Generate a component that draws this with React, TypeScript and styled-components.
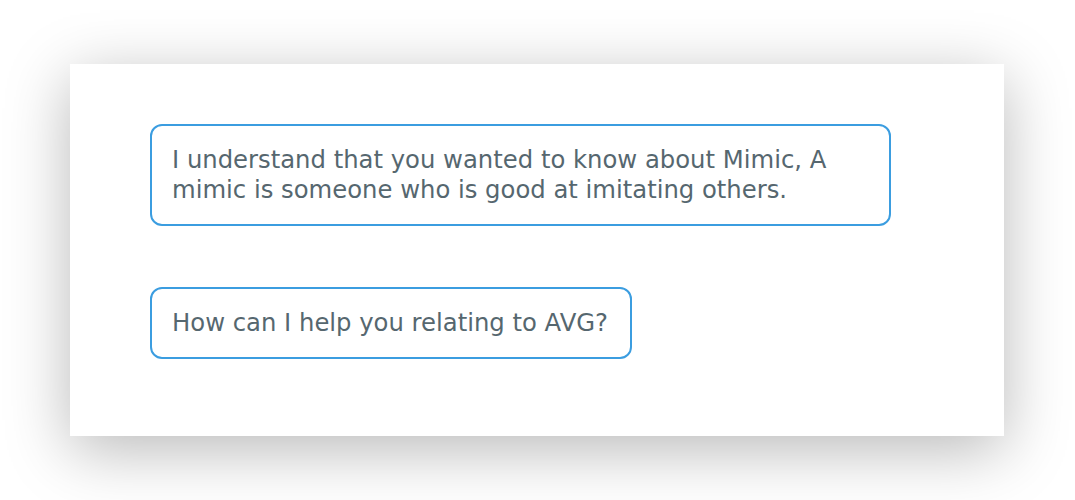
import React from "react";
import styled, { createGlobalStyle } from "styled-components";

const Global = createGlobalStyle`
  html, body { margin: 0; padding: 0; background: #ffffff; }
  body { font-family: "DejaVu Sans", Verdana, sans-serif; }
`;

const Page = styled.div`
  width: 1075px;
  height: 500px;
  box-sizing: border-box;
  padding: 64px 71px 0 70px;
`;

const Card = styled.div`
  width: 934px;
  height: 372px;
  box-sizing: border-box;
  background: #ffffff;
  box-shadow: 0 14px 60px rgba(0, 0, 0, 0.28);
  padding: 60px 80px;
  display: flex;
  flex-direction: column;
  align-items: flex-start;
  gap: 61px;
`;

const Bubble = styled.div`
  box-sizing: border-box;
  max-width: 741px;
  border: 2px solid #3b9de0;
  border-radius: 12px;
  padding: 19px 22px 19px 20px;
  color: #56676f;
  font-size: 24.3px;
  line-height: 30px;
`;

export default function App() {
  return (
    <>
      <Global />
      <Page>
        <Card>
          <Bubble>
            I understand that you wanted to know about Mimic, A mimic is someone who is good at imitating others.
          </Bubble>
          <Bubble>How can I help you relating to AVG?</Bubble>
        </Card>
      </Page>
    </>
  );
}
